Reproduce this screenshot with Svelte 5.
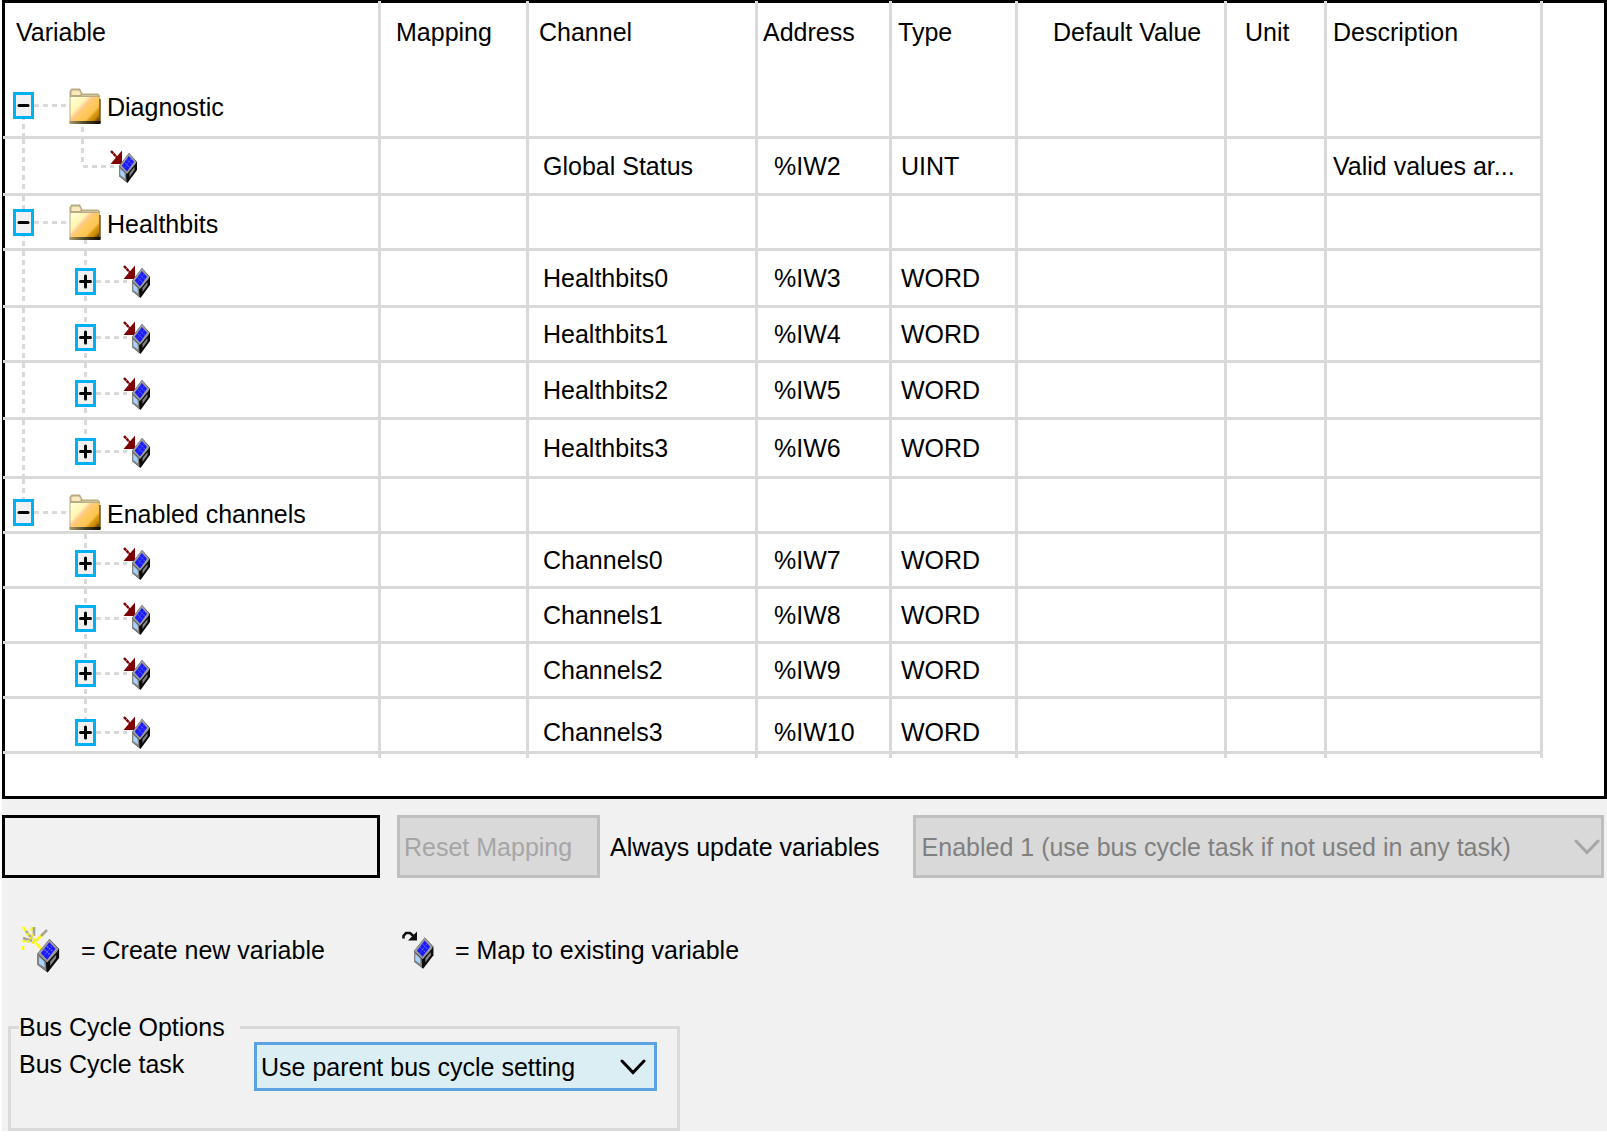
<script>
  // I/O mapping page: channel tree, mapping controls and bus cycle options
  const columns = [
    { name: 'Variable', key: 'variable' },
    { name: 'Mapping', key: 'mapping' },
    { name: 'Channel', key: 'channel' },
    { name: 'Address', key: 'address' },
    { name: 'Type', key: 'type' },
    { name: 'Default Value', key: 'default' },
    { name: 'Unit', key: 'unit' },
    { name: 'Description', key: 'description' }
  ];

  let groups = $state([
    {
      name: 'Diagnostic',
      size: 'first',
      open: true,
      rows: [
        { channel: 'Global Status', address: '%IW2', type: 'UINT', description: 'Valid values ar...', leaf: true, size: 'tall' }
      ]
    },
    {
      name: 'Healthbits',
      size: '',
      open: true,
      rows: [
        { channel: 'Healthbits0', address: '%IW3', type: 'WORD', size: 'tall' },
        { channel: 'Healthbits1', address: '%IW4', type: 'WORD', size: '' },
        { channel: 'Healthbits2', address: '%IW5', type: 'WORD', size: 'tall' },
        { channel: 'Healthbits3', address: '%IW6', type: 'WORD', size: 'taller' }
      ]
    },
    {
      name: 'Enabled channels',
      size: 'low',
      open: true,
      rows: [
        { channel: 'Channels0', address: '%IW7', type: 'WORD', size: '' },
        { channel: 'Channels1', address: '%IW8', type: 'WORD', size: '' },
        { channel: 'Channels2', address: '%IW9', type: 'WORD', size: '' },
        { channel: 'Channels3', address: '%IW10', type: 'WORD', size: 'low' }
      ]
    }
  ]);
</script>

{#snippet cube()}
  <polygon points="10,0 18,9 18,17 8.5,30 0,23 0,13" fill="#0c0c0c" />
  <polygon points="10,0 17.5,9 16,11.5 8,21 0,13" fill="#9c9c9c" />
  <polygon points="9.8,3 15,8.8 8,18.500 2.800,12.800" fill="#1a1aff" />
  <path d="M8 6.500l5.200 5.200M5.800 9.500l5 5" stroke="#8c8cff" stroke-width="0.900" stroke-dasharray="1.300 1" fill="none" />
  <path d="M12 6l-6.500 9" stroke="#7474ff" stroke-width="0.700" stroke-dasharray="1.300 1.300" fill="none" />
  <polygon points="0,13 7,20.500 7.500,29 0,23" fill="#858585" />
  <polygon points="1.300,16 5.500,20 6,25.500 1.300,22" fill="#a6d3ff" />
  <polygon points="10.500,20 15.500,14 15.500,17 10.500,24" fill="#858585" />
{/snippet}

{#snippet mappedIcon()}
  <svg class="var-icon" width="27" height="33" viewBox="0 0 27 33" aria-hidden="true">
    <path d="M1 1l7 7.500" stroke="#7f0000" stroke-width="2.400" stroke-dasharray="3.200 0.400" />
    <polygon points="12,0.500 12,14 0.500,14" fill="#7f0000" />
    <g transform="translate(9 3)">{@render cube()}</g>
  </svg>
{/snippet}

{#snippet folder()}
  <svg class="folder" width="32" height="36" viewBox="0 0 32 36" aria-hidden="true">
    <defs>
      <linearGradient id="folder-face" x1="0" y1="0.1" x2="1" y2="0.9">
        <stop offset="0" stop-color="#ffffd8" />
        <stop offset="0.3" stop-color="#fff6b4" />
        <stop offset="0.42" stop-color="#ffc68c" />
        <stop offset="0.5" stop-color="#ffcb62" />
        <stop offset="0.72" stop-color="#fbc352" />
        <stop offset="0.8" stop-color="#d99a10" />
        <stop offset="0.9" stop-color="#c58708" />
        <stop offset="1" stop-color="#6a4300" />
      </linearGradient>
      <linearGradient id="folder-shade" x1="0" y1="0" x2="1" y2="0">
        <stop offset="0" stop-color="#a89b6c" />
        <stop offset="0.5" stop-color="#4d4326" />
        <stop offset="1" stop-color="#0c0800" />
      </linearGradient>
    </defs>
    <path d="M0.500 35V3l2-2.500h8.500l2.500 5H29l2 2V35z" fill="#b9ac82" />
    <path d="M2.500 7V3.500l1-1h6.500l1.500 2V7z" fill="#f9e9bd" />
    <path d="M13 7.500h16" stroke="#cfc5a0" stroke-width="1" />
    <rect x="1.500" y="9" width="29" height="24.500" fill="url(#folder-face)" />
    <path d="M31 11v24" stroke="#6a4e14" stroke-width="1.400" />
    <rect x="0.500" y="33" width="31" height="3" fill="url(#folder-shade)" />
  </svg>
{/snippet}

{#snippet emptyCells()}
  {#each columns.slice(1) as col}
    <td class={col.key}></td>
  {/each}
{/snippet}

<main>
  <section class="panel">
    <table>
      <colgroup>
        {#each columns as col}
          <col class={'col-' + col.key} />
        {/each}
      </colgroup>
      <thead>
        <tr>
          {#each columns as col}
            <th class={col.key} scope="col">{col.name}</th>
          {/each}
        </tr>
      </thead>
      <tbody>
        {#each groups as group, g}
          <tr class={group.size}>
            <td class="tree">
              <span class="guide root" class:start={g === 0} class:end={g === groups.length - 1}></span>
              {#if group.open}
                <span class="guide stub" class:leaf={group.rows[0].leaf}></span>
              {/if}
              <div class="node">
                <button
                  class="toggle"
                  aria-label={'Toggle ' + group.name}
                  aria-expanded={group.open}
                  onclick={() => (group.open = !group.open)}
                >
                  <svg width="15" height="15" viewBox="0 0 15 15" aria-hidden="true">
                    <path d={group.open ? 'M3 7.500h9' : 'M2.500 7.500h10M7.500 2v11'} />
                  </svg>
                </button>
                <span class="link wide"></span>
                {@render folder()}
                <span class="label">{group.name}</span>
              </div>
            </td>
            {@render emptyCells()}
          </tr>
          {#if group.open}
            {#each group.rows as row, r}
              <tr class={row.size}>
                <td class="tree" class:child={!row.leaf}>
                  {#if g < groups.length - 1}
                    <span class="guide root"></span>
                  {/if}
                  <span class="guide branch" class:leaf={row.leaf} class:end={r === group.rows.length - 1}></span>
                  <div class="node inner" class:leaf={row.leaf}>
                    {#if !row.leaf}
                      <button class="toggle" aria-label={'Expand ' + row.channel}>
                        <svg width="15" height="15" viewBox="0 0 15 15" aria-hidden="true">
                          <path d="M2.500 7.500h10M7.500 2v11" />
                        </svg>
                      </button>
                    {/if}
                    <span class="link"></span>
                    {@render mappedIcon()}
                  </div>
                </td>
                <td class="mapping"></td>
                <td class="channel">{row.channel}</td>
                <td class="address">{row.address}</td>
                <td class="type">{row.type}</td>
                <td class="default"></td>
                <td class="unit"></td>
                <td class="description">{row.description ?? ''}</td>
              </tr>
            {/each}
          {/if}
        {/each}
        <tr class="tail" aria-hidden="true">
          <td></td>
          {@render emptyCells()}
        </tr>
      </tbody>
    </table>
  </section>

  <div class="controls">
    <input type="text" aria-label="Mapping filter" />
    <button class="reset" disabled>Reset Mapping</button>
    <label for="update">Always update variables</label>
    <div class="select update">
      <select id="update" disabled>
        <option>Enabled 1 (use bus cycle task if not used in any task)</option>
      </select>
      <svg width="26" height="18" viewBox="0 0 26 18" aria-hidden="true">
        <path d="M2 3l11 11.500L24 3" />
      </svg>
    </div>
  </div>

  <div class="legend">
    <div class="entry">
      <svg width="38" height="47" viewBox="0 0 38 47" aria-hidden="true">
        <g fill="none" stroke-width="2.600">
          <path d="M1 1l3 4M9 5l2-4M14 17l7 8M1 16l3-3M1 20v4M16 13l6-6" stroke="#ffff00" />
          <path d="M4 5l6 8M12 1v9M1 12l9 3M19 10l6-6" stroke="#a3a3a3" />
          <path d="M10 8l3 8M5 15l8 2M14 15l5-5M5 7l4 6" stroke="#f2ee20" stroke-dasharray="3 2" />
        </g>
        <g transform="translate(15.500 13) scale(1.200 1.120)">{@render cube()}</g>
      </svg>
      <span>= Create new variable</span>
    </div>
    <div class="entry">
      <svg width="32" height="38" viewBox="0 0 32 38" aria-hidden="true">
        <path d="M1.500 7.500V5L4 2h4l4 3.500" fill="none" stroke="#111" stroke-width="2.600" />
        <polygon points="15,0.500 15,9.500 6,9.500" fill="#111" />
        <g transform="translate(12 6.500) scale(1.080 1.040)">{@render cube()}</g>
      </svg>
      <span>= Map to existing variable</span>
    </div>
  </div>

  <fieldset>
    <legend>Bus Cycle Options</legend>
    <div class="option">
      <label for="task">Bus Cycle task</label>
      <div class="select task">
        <select id="task">
          <option>Use parent bus cycle setting</option>
        </select>
        <svg width="26" height="18" viewBox="0 0 26 18" aria-hidden="true">
          <path d="M2 3l11 11.500L24 3" />
        </svg>
      </div>
    </div>
  </fieldset>
</main>

<style>
  :global(body) {
    background: #fff;
  }

  main {
    --line: #d9d9d9;
    margin-left: 2px;
    background: #f1f1f1;
    color: #000;
    font-family: "Liberation Sans", Arial, sans-serif;
    font-size: 25px;
    line-height: 30px;
  }

  input,
  button,
  select {
    box-sizing: border-box;
    margin: 0;
    border-radius: 0;
    font: inherit;
  }

  .panel {
    padding-bottom: 38px;
    border: 3px solid #000;
    background: #fff;
  }

  /* the grid lines run over the panel's frame */
  table {
    table-layout: fixed;
    width: calc(100% - 59px);
    margin: -2px 0 0 -2px;
    border-spacing: 0;
  }

  .col-variable { width: 378px; }
  .col-mapping { width: 148px; }
  .col-channel { width: 229px; }
  .col-address { width: 134px; }
  .col-type { width: 126px; }
  .col-default { width: 209px; }
  .col-unit { width: 100px; }

  th,
  td {
    box-sizing: border-box;
    padding: 0;
    border-right: 3px solid var(--line);
    white-space: nowrap;
  }

  th {
    height: 74px;
    padding-top: 16px;
    font-weight: normal;
    text-align: left;
    vertical-align: top;
  }

  td {
    position: relative;
    height: 55px;
    border-bottom: 3px solid var(--line);
    vertical-align: middle;
  }

  .first td { height: 64px; }
  .tall td { height: 57px; }
  .taller td { height: 59px; }
  .child { padding-top: 6px; }
  .low td { padding-top: 14px; }

  .tail td {
    height: 4px;
    border-bottom: 0;
  }

  th.variable { padding-left: 13px; }
  th.mapping { padding-left: 15px; }
  th.channel { padding-left: 10px; }
  th.address { padding-left: 5px; }
  th.type { padding-left: 6px; }
  th.default { padding-left: 35px; }
  th.unit { padding-left: 18px; }
  .description { padding-left: 6px; }
  td.channel { padding-left: 14px; }
  td.address { padding-left: 16px; }
  td.type { padding-left: 9px; }

  .node {
    position: relative;
    display: flex;
    align-items: center;
    padding-left: 10px;
  }

  .node.inner { padding-left: 72px; }
  .node.inner.leaf { padding-left: 80px; }

  .toggle {
    display: flex;
    align-items: center;
    justify-content: center;
    width: 21px;
    height: 27px;
    padding: 0;
    border: 3px solid #00b0f0;
    background: #f1f1f1;
  }

  .toggle svg { flex: none; }

  .toggle path {
    fill: none;
    stroke: #000;
    stroke-width: 3;
    stroke-linecap: round;
  }

  .link {
    width: 31px;
    height: 3px;
    background: repeating-linear-gradient(90deg, var(--line) 0 5px, transparent 5px 9px);
  }

  .link.wide { width: 35px; }
  .var-icon { margin-left: -4px; }

  .label {
    margin-left: 6px;
    padding-top: 3px;
  }

  .folder,
  .var-icon {
    display: block;
    flex: none;
  }

  .guide {
    position: absolute;
    top: 0;
    bottom: -3px;
    width: 3px;
    background: repeating-linear-gradient(var(--line) 0 5px, transparent 5px 9px);
  }

  .guide.root { left: 19px; }
  .guide.branch,
  .guide.stub { left: 81px; }
  .guide.leaf { left: 78px; }
  .guide.start { top: 50%; }
  .guide.end { bottom: 50%; }

  .guide.stub {
    top: auto;
    height: 12px;
  }

  .controls {
    display: flex;
    align-items: center;
    padding: 16px 3px 0 0;
  }

  .controls input {
    width: 378px;
    height: 63px;
    padding: 0 8px;
    border: 3px solid #000;
    background: #f1f1f1;
  }

  .reset {
    width: 203px;
    height: 63px;
    margin: 0 10px 0 17px;
    padding: 0 4px;
    border: 3px solid #bfbfbf;
    background: #d9d9d9;
    color: #a6a6a6;
    text-align: left;
  }

  .select {
    position: relative;
  }

  .select select {
    display: block;
    width: 100%;
    appearance: none;
    color: inherit;
    opacity: 1;
  }

  .select svg {
    position: absolute;
    top: 50%;
    margin-top: -9px;
    pointer-events: none;
  }

  .select path {
    fill: none;
    stroke: currentColor;
    stroke-width: 3;
    stroke-linecap: round;
  }

  .update {
    flex: 1;
    margin-left: 33px;
    color: #808080;
  }

  .update select {
    height: 63px;
    padding: 0 40px 0 6px;
    border: 3px solid #bfbfbf;
    background: #d9d9d9;
  }

  .update svg {
    right: 4px;
    color: #a6a6a6;
  }

  .legend {
    display: flex;
    align-items: center;
    gap: 77px;
    padding: 48px 20px 0;
  }

  .entry {
    display: flex;
    align-items: center;
    gap: 21px;
  }

  .entry svg { flex: none; }

  fieldset {
    box-sizing: border-box;
    width: 672px;
    max-width: 100%;
    margin: 39px 0 0 6px;
    padding: 0 20px 37px 8px;
    border: 3px solid var(--line);
  }

  legend {
    padding: 0 15px 0 0;
  }

  .option {
    display: flex;
    align-items: center;
    justify-content: space-between;
  }

  .option label { padding-bottom: 6px; }

  .task { width: 403px; }

  .task select {
    height: 49px;
    padding: 0 40px 0 4px;
    border: 3px solid #5ba3e0;
    background: #dbeef4;
  }

  .task svg { right: 11px; }
</style>
